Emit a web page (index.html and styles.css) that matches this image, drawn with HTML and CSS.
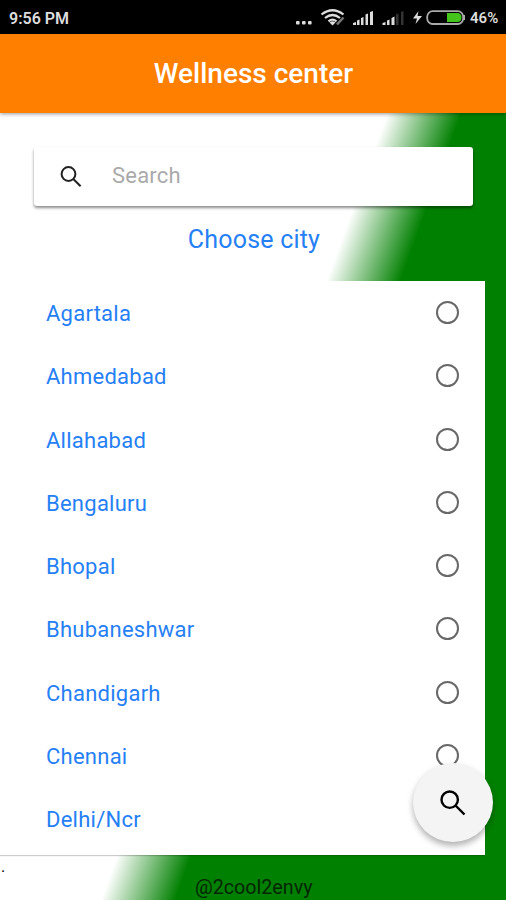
FILE: index.html
```html
<!DOCTYPE html>
<html lang="en">
<head>
<meta charset="utf-8">
<title>Wellness center</title>
<link rel="stylesheet" href="styles.css">
</head>
<body>
<div class="screen">
  <div class="status">
    <span class="time">9:56 PM</span>
    <svg class="indicators" width="178" height="34" viewBox="290 0 178 34">
      <g fill="#ddd"><rect x="296" y="21" width="3.6" height="3.6" rx="1"/><rect x="302" y="21" width="3.6" height="3.6" rx="1"/><rect x="308" y="21" width="3.6" height="3.6" rx="1"/></g>
      <path fill="none" stroke="#ddd" stroke-width="2.2" d="M321.5 14.5Q332.5 6 343.500 14.500M325 18Q332.500 12 340 18M328.500 21.300Q332.500 18 336.500 21.300"/>
      <path fill="#ddd" d="M329.500 22.500Q332.500 20 335.500 22.500L332.500 25.500Z"/>
      <path d="M337 24.500L343.500 17.500" stroke="#777" stroke-width="2.500"/>
      <path fill="#ddd" d="M353 25v-2l3-1v3zM357 25v-4.500l2.500-1V25zM361 25v-7l2.500-1v8zM365.500 25V14.500l2.500-1V25zM370 25V12l3-1v14zM382.500 25v-2l3-1v3zM387 25v-4.500l2.500-1V25zM391.500 25v-7l3-1.500V25z"/>
      <path fill="#333" d="M396 25V14.500l2.500-1V25zM401 25V12l2.500-1v14z"/>
      <path fill="#ddd" d="M418.500 11L413 18.500h4l-1.500 5.500 6.500-8h-4.500z"/>
      <path fill="#45c51b" d="M447 13h10q4.500 0 4.500 4.500T457 22H447z"/>
      <rect x="427.200" y="11.200" width="36" height="12.800" rx="5.500" fill="none" stroke="#aaa" stroke-width="1.800"/>
      <path d="M464 15v5" stroke="#aaa" stroke-width="2"/>
    </svg>
    <span class="percent">46%</span>
  </div>
  <header class="appbar"><h1>Wellness center</h1></header>
  <main class="content">
    <div class="searchbox">
      <svg class="glass" viewBox="0 0 22 22"><circle cx="8.500" cy="8" r="6.900"/><path d="M13.300 13L20.600 20.300"/></svg>
      <span class="placeholder">Search</span>
    </div>
    <h2>Choose city</h2>
    <ul class="cities">
      <li><span>Agartala</span><i class="radio"></i></li>
      <li><span>Ahmedabad</span><i class="radio"></i></li>
      <li><span>Allahabad</span><i class="radio"></i></li>
      <li><span>Bengaluru</span><i class="radio"></i></li>
      <li><span>Bhopal</span><i class="radio"></i></li>
      <li><span>Bhubaneshwar</span><i class="radio"></i></li>
      <li><span>Chandigarh</span><i class="radio"></i></li>
      <li><span>Chennai</span><i class="radio"></i></li>
      <li><span>Delhi/Ncr</span><i class="radio"></i></li>
    </ul>
    <footer><span class="dot">.</span><span class="credit">@2cool2envy</span></footer>
  </main>
  <div class="fab"><svg class="glass" viewBox="0 0 26 26"><circle cx="9.700" cy="9.700" r="8.200"/><path d="M15.500 15.500L24.500 24.500"/></svg></div>
</div>
</body>
</html>
```

FILE: styles.css
```css
* { box-sizing: border-box; }
body { margin: 0; font-family: Roboto, "Liberation Sans", sans-serif; }
.screen {
  position: relative;
  display: flex;
  flex-direction: column;
  width: 506px;
  height: 900px;
  overflow: hidden;
}
.status {
  display: flex;
  align-items: center;
  height: 34px;
  padding-left: 9px;
  background: #000;
  color: #ddd;
  font-size: 16px;
  font-weight: 600;
}
.time { width: 281px; padding-top: 2px; white-space: nowrap; }
.indicators { flex: none; }
.percent { margin-left: 2px; padding-top: 2px; font-size: 15px; }
.appbar {
  z-index: 1;
  display: flex;
  justify-content: center;
  align-items: center;
  height: 79px;
  flex: none;
  background: #ff8000;
  box-shadow: 0 1px 4px rgba(0, 0, 0, .4);
}
h1 { margin: 0 0 0 1px; color: #fff; font-size: 28px; font-weight: 500; line-height: 32px; }
.content {
  display: flex;
  flex-direction: column;
  height: 787px;
  padding-top: 34px;
  background: linear-gradient(110deg, #fff 48.900%, green 58.300%);
}
.searchbox {
  display: flex;
  align-items: center;
  width: 439px;
  height: 59px;
  flex: none;
  margin-left: 34px;
  padding-left: 26px;
  border-radius: 3px;
  background: #fff;
  box-shadow: 0 2px 3px rgba(0, 0, 0, .45);
}
.glass { width: 22px; height: 22px; fill: none; stroke: #222; stroke-width: 2; }
.placeholder { margin: -2px 0 0 30px; color: #aaa; font-size: 22px; letter-spacing: .2px; }
h2 {
  margin: 18px 0 0 2px;
  color: #2680f5;
  font-size: 25px;
  font-weight: 400;
  line-height: 32px;
  letter-spacing: .2px;
  text-align: center;
}
.cities {
  width: 485px;
  height: 574px;
  flex: none;
  margin: 25px 0 0;
  padding: 0;
  background: #fff;
  box-shadow: 0 1px 1px rgba(0, 0, 0, .2);
  list-style: none;
}
.cities li {
  display: flex;
  align-items: center;
  justify-content: space-between;
  height: 63.250px;
  padding: 0 26px 0 46px;
  color: #2680f5;
  font-size: 22px;
  letter-spacing: .25px;
}
.cities span { padding-top: 2px; }
.radio { width: 23px; height: 23px; border: 2.500px solid #686868; border-radius: 50%; }
footer { display: flex; padding-top: 3px; color: #000; }
.dot { width: 195px; padding-left: 1px; font-size: 16px; line-height: 18px; }
.credit { padding-top: 18px; font-size: 19.700px; line-height: 24px; color: #052505; }
.fab {
  position: absolute;
  z-index: 2;
  right: 13px;
  top: 763px;
  display: flex;
  align-items: center;
  justify-content: center;
  width: 80px;
  height: 79px;
  border-radius: 50%;
  background: #f4f4f4;
  box-shadow: 0 4px 6px rgba(0, 0, 0, .3);
}
.fab .glass { width: 26px; height: 26px; stroke: #000; stroke-width: 2.400; }
```
